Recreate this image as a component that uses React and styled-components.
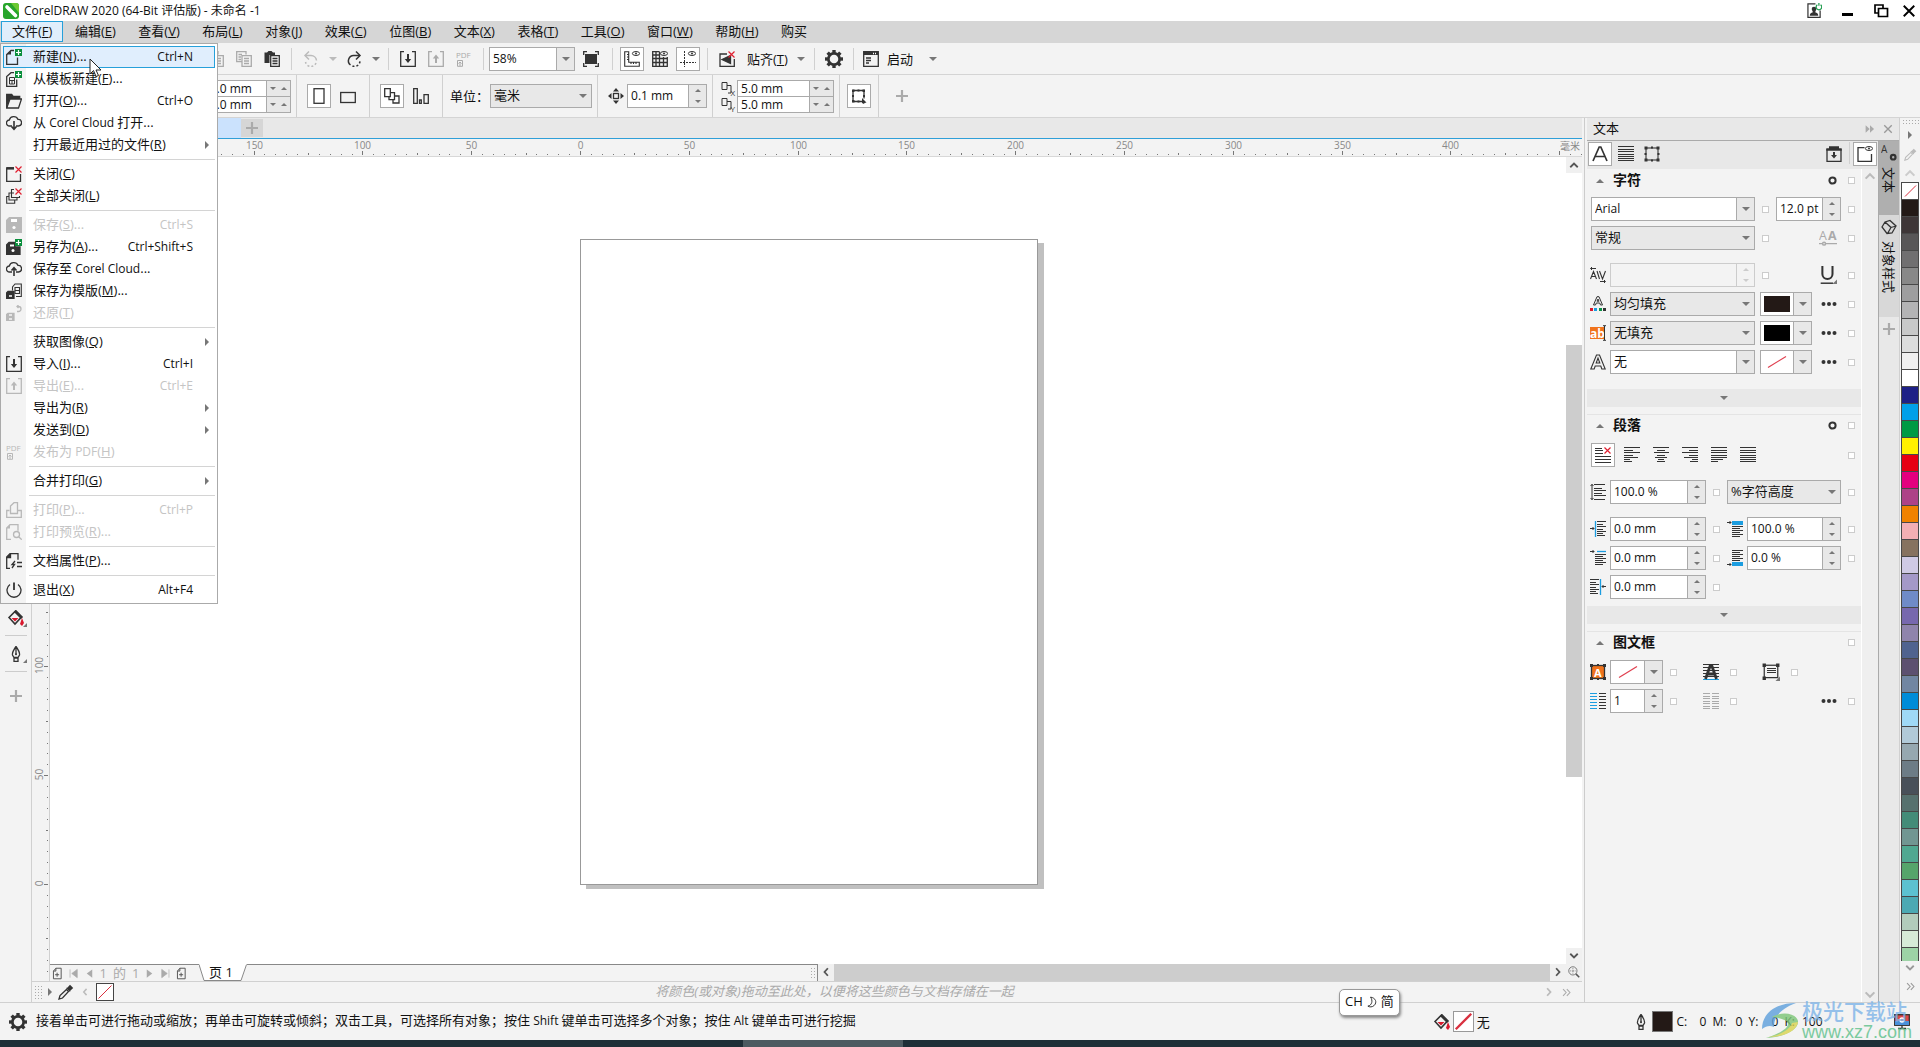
import React from "react";
import styled, { createGlobalStyle } from "styled-components";

const GlobalStyle = createGlobalStyle`
  * {
    box-sizing: border-box;
  }
  body {
    margin: 0;
    overflow: hidden;
    background: #f3f3f3;
    color: #111;
    font-family: "Open Sans", "Noto Sans CJK SC", sans-serif;
    font-size: 13px;
    line-height: 16px;
  }
  button, input, select {
    margin: 0;
    padding: 0;
    border: 0;
    border-radius: 0;
    background: none;
    color: inherit;
    font: inherit;
    outline: none;
  }
  svg {
    display: block;
    flex: none;
    writing-mode: horizontal-tb;
  }
`;

/* ---------- icons ---------- */

const Icon = ({ name, size = 16, color = "#333" }) => (
  <svg
    width={size}
    height={size}
    viewBox="0 0 16 16"
    fill="none"
    stroke={color}
    strokeWidth="1.3"
    color={color}
  >
    {icons[name]}
  </svg>
);

const plusBadge = (
  <>
    <rect x="9" y="0" width="7" height="7" fill="#0a8f3c" stroke="none" />
    <path d="M12.5 1v5M10 3.5h5" stroke="#fff" strokeWidth="1.2" />
  </>
);
const redCross = <path d="M9.5 .5l6 6M15.5 .5l-6 6" stroke="#e02030" strokeWidth="1.2" />;
const eye = (
  <>
    <ellipse cx="12" cy="2.5" rx="3.6" ry="2" strokeWidth="1" />
    <circle cx="12" cy="2.5" r="1" fill="currentColor" stroke="none" />
  </>
);
const corner = <path d="M16 12v4h-4z" fill="#777" stroke="none" />;
const lines = (rows) => (
  <path
    d={rows.map(([x, y, w]) => `M${x} ${y + 0.5}h${w}`).join("")}
    strokeWidth="1"
    shapeRendering="crispEdges"
  />
);
const gearTeeth = [0, 45, 90, 135, 180, 225, 270, 315].map((a) => (
  <rect key={a} x="6.5" y="0" width="3" height="3" fill="currentColor" stroke="none" transform={`rotate(${a} 8 8)`} />
));

const icons = {
  newDoc: <><path d="M11.500 8.500v6.800H.7V5.500L5 1.500h3" /><path d="M.7 5.500L5 1.500v4z" fill="currentColor" stroke="none" />{plusBadge}</>,
  template: <><path d="M8 1.700H5L.7 5.500v9.800h10V8.500" /><path d="M3.500 6.500h5v6.500h-5zM3.500 9.500h5M6 9.500V13" strokeWidth="1" />{plusBadge}</>,
  open: <><path d="M.7 15V1.500h5l1.500 2h6.500V6" /><path d="M.7 1.500h5l1.500 2h6V6H4L.7 14z" fill="currentColor" stroke="none" /><path d="M.7 15L4 6h11.500l-3 9z" /></>,
  cloudDown: <><path d="M6 11H3.6A3 3 0 013.3 5 4.6 4.6 0 0112 4.4 3.3 3.3 0 0112.5 11H10" /><path d="M8 6v8M5.5 11.5L8 14.3l2.5-2.8" strokeWidth="1.6" /></>,
  cloudUp: <><path d="M6 11H3.6A3 3 0 013.3 5 4.6 4.6 0 0112 4.4 3.3 3.3 0 0112.5 11H10" /><path d="M8 15V7M5.5 9.5L8 6.7l2.5 2.8" strokeWidth="1.6" /></>,
  close: <><path d="M14.5 8v7.3H.7V2H8" /><path d="M.7 2.4H8" strokeWidth="2.4" />{redCross}</>,
  closeAll: <><path d="M8 1.500H5.500V5M13.500 8v1.500H5.500V5H8M5.500 5H3v7h8V9.500M3 8.500H.7v6.800h8V12" strokeWidth="1.1" />{redCross}</>,
  save: <><path d="M.5 3.500L3.500 .5h12v15H.5z" fill="currentColor" /><path d="M5 3.500h6" stroke="#fff" strokeWidth="3" /><circle cx="8" cy="10.500" r="1.600" fill="#fff" stroke="none" /></>,
  saveAs: <><path d="M.5 6L3 3.500h6V8h5v7.500H.5z" fill="currentColor" /><path d="M4 6.500h4" stroke="#fff" strokeWidth="2" /><circle cx="7" cy="11.500" r="1.500" fill="#fff" stroke="none" />{plusBadge}</>,
  saveTemplate: <><path d="M6.500 7.500V4L9 1h6.300v12.500H10M9 4.500h4.500v6H9zM9 7.500h4.500" strokeWidth="1.1" /><path d="M.5 10L2 8.500h6v7H.5z" fill="currentColor" /><path d="M3 13h3" stroke="#fff" strokeWidth="1.500" /></>,
  revert: <><path d="M.5 9.500L2 8.500h6v7H.5z" fill="currentColor" /><path d="M3 10h3M3 14h3" stroke="#f3f3f3" strokeWidth="1.300" /><path d="M11 1.500h1.500a2.500 2.500 0 010 5H11M12.500 0L11 1.500 12.500 3" /></>,
  import: <><path d="M4 .7H.7v14.600h14.600V.7H12" /><path d="M8 3v8" strokeWidth="2" /><path d="M4.800 8L8 12l3.200-4z" fill="currentColor" stroke="none" /></>,
  export: <><path d="M4 .7H.7v14.600h14.600V.7H12" /><path d="M8 12V5" strokeWidth="2" /><path d="M4.800 7.500L8 3.500l3.200 4z" fill="currentColor" stroke="none" /></>,
  pdf: <><text x="0" y="7" fontSize="8" fill="currentColor" stroke="none">PDF</text><path d="M1.500 15.300V9.500h5v5.800zM4 15v-4M2.500 12.500L4 11l1.500 1.500" strokeWidth="1" /></>,
  print: <><path d="M3.500 8.500H.7v6.800h14.600V8.500H12" /><path d="M4.500 11.500V4L8 .7h3.500v10.800z" /></>,
  preview: <><path d="M5 15.300H.7V4L4 .7h8v6" /><path d="M.7 4.500V4L4 .7v3.800z" fill="currentColor" stroke="none" /><circle cx="10.500" cy="10.500" r="3" /><path d="M12.700 12.700l3 3" /></>,
  props: <><path d="M4 15.300H.7V4L4 .7h8v6" /><path d="M1 4.500L4.500 1v3.500z" fill="currentColor" /><path d="M11 9.500h5M11 13.500h5M9 8l-3 3.500h2.500L6 15" /></>,
  power: <><path d="M4 2.500a7 7 0 108 0" /><path d="M8 .5v7.500" strokeWidth="1.800" /></>,
  copy: <path d="M10 3.500V.7H.7v10H6M2.500 3.500H6M2.500 6H5M2.500 8.500H5M6 4.700h9.300v10.600H6zM8 7.500h5M8 10h5M8 12.500h5" />,
  paste: <><path d="M1 1.500h2L4.500 0h3L9 1.500h2V4H5.500v8H.5V1.500z" fill="currentColor" stroke="none" /><path d="M6.700 4.700h8.600v10.600H6.700zM8.500 7.500h5M8.500 10h5M8.500 12.500h5" /></>,
  undo: <><path d="M2 4.500h6a5.500 5.500 0 015.500 5" strokeWidth="1.500" /><path d="M6 .5L2 4.500l4 4" strokeWidth="1.500" /><path d="M13 12a5.500 5.500 0 01-10.500-1" strokeDasharray="2 2" strokeWidth="1.500" /></>,
  redo: <><path d="M14 4.500H8A5.300 5.300 0 004.500 14" strokeWidth="1.500" /><path d="M10 .5l4 4-4 4" strokeWidth="1.500" /><path d="M6.500 15a5.500 5.500 0 007.500-5" strokeDasharray="2 2" strokeWidth="1.500" /></>,
  fullScreen: <><rect x="2" y="3" width="12" height="10" fill="currentColor" stroke="none" /><path d="M.7 4V.7H4M12 .7h3.300V4M15.300 12v3.300H12M4 15.300H.7V12" /></>,
  rulers: <><path d="M.7.7h4v10.600h10.600v4H.7zM3 3.500h1.700M3 6h1.700M3 8.500h1.700M7 11.500V13M9.500 11.500V13M12 11.500V13" strokeWidth="1.1" />{eye}</>,
  grid: <><path d="M7.500 .7H.7v14.600h14.600V6M4 .7v14.600M7.500 .7v14.600M11.500 6v9.300M.7 4h7M.7 7.500h14.600M.7 11.500h14.600" />{eye}</>,
  guides: <><path d="M4.500 0v16M0 11.500h16" strokeWidth="1" strokeDasharray="2 1" />{eye}</>,
  snapOff: <><path d="M8 3H1v12.300h14.300V8" /><path d="M3 8.500L11.500 4.500v8z" fill="currentColor" />{redCross}</>,
  gear: <><circle cx="8" cy="8" r="5" strokeWidth="2.400" />{gearTeeth}</>,
  launch: <><path d="M.7.7h14.600v14.600H.7zM3 7h5M3 9.500h5M3 12h3" /><path d="M.7 2.500h14.600" strokeWidth="3" /><path d="M10 2.500h4" stroke="#fff" strokeDasharray="1 1" /></>,
  portrait: <rect x="3" y=".7" width="10" height="14.600" />,
  landscape: <rect x=".7" y="4.500" width="14.600" height="10" />,
  allPages: <path d="M.7.7h5.600v8H.7zM6 4.700h4.500v7H5V9M10 8h5v7H9v-3" />,
  curPage: <path d="M.7.7h3.600v14.600H.7zM6.500 12h1.800v3.300H6.500zM11 6.700h4.300v8.600H11z" />,
  nudge: <><rect x="5.500" y="5.500" width="5" height="5" /><path d="M8 0l3 3.500H5zM8 16l3-3.500H5zM0 8l3.500-3v6zM16 8l-3.500-3v6z" fill="currentColor" stroke="none" /></>,
  dupX: <><path d="M1 1.500h5v7H1zM6 4.500h4V12H7" strokeWidth="1" /><text x="9.500" y="15" fontSize="8" fill="currentColor" stroke="none">X</text></>,
  dupY: <><path d="M1 1.500h5v7H1zM6 4.500h4V12H7" strokeWidth="1" /><text x="9.500" y="15" fontSize="8" fill="currentColor" stroke="none">Y</text></>,
  treat: <><path d="M2 2.500h11v8M11 13.500H2V2.500" /><path d="M1 1.500h2.500v2.500H1zM11.500 1.500H14v2.500h-2.500zM1 12h2.500v2.500H1zM6.500 1.500h2v2h-2zM1 7h2v2H1zM12 7h2v2h-2zM6.500 12.500h2v2h-2z" fill="currentColor" stroke="none" /><path d="M11 10l4.500 4.500-2 .5-.5 1-2-1z" fill="currentColor" stroke="none" /></>,
  bigA: <path d="M1 15L7.200 1h1.600L15 15M3.500 10.500h9" strokeWidth="1.700" />,
  frame: <><rect x="2" y="2" width="12" height="12" strokeWidth="1.1" /><path d="M.5 .5h3v3h-3zM12.500 .5h3v3h-3zM.5 12.500h3v3h-3zM12.500 12.500h3v3h-3zM7 .5h2v2H7zM7 13.500h2v2H7zM.5 7h2v2h-2zM13.500 7h2v2h-2z" fill="currentColor" stroke="none" /></>,
  dock: <><path d="M1 3v12.300h14V3" /><path d="M.3 3.500h15.400M3 1.500h10" strokeWidth="2.400" /><path d="M8 6v4" strokeWidth="2" /><path d="M5 9l3 3.500L11 9z" fill="currentColor" stroke="none" /></>,
  panelEye: <><path d="M7.500 1.700H1v13.600h13.500V8" />{eye}</>,
  caps: <><text x="0" y="10" fontSize="11" fill="currentColor" stroke="none">A</text><text x="8" y="10" fontSize="11" fontWeight="bold" fill="currentColor" stroke="none">A</text><path d="M0 13h3M6 13h10" /><circle cx="4.500" cy="13" r="1.300" /></>,
  kern: <><path d="M.8 1.500H6M2 0L.5 1.500 2 3M10 14.500h5M14 13l1.500 1.500L14 16" strokeWidth="1" /><path d="M.5 12L3.500 4.500 6.500 12M1.500 9.500h4M7 4l2.500 8M9.500 4l3 8 3-8" strokeWidth="1.100" /></>,
  underline: <><path d="M3 0v7a4.500 4.500 0 009 0V0" strokeWidth="1.800" /><path d="M1.500 15.300h11" />{corner}</>,
  fillA: <><path d="M3.500 9L7 .7h2L12.500 9h-2l-.8-2H6.300l-.8 2zM7 5.200h2L8 3z" strokeWidth="1" /><path d="M0 12h3v3H0z" fill="#d9182d" stroke="none" /><path d="M4 12h3v3H4z" fill="#1b9de0" stroke="none" /><path d="M9 12h3v3H9z" fill="#0c9247" stroke="none" /><path d="M13 12h3v3h-3z" fill="#333" stroke="none" /></>,
  bgAb: <><rect x="0" y="2" width="14" height="12" fill="#f0731c" stroke="none" /><text x="0" y="13" fontSize="12" fontWeight="bold" fill="#fff" stroke="none">ab</text><path d="M14.500 1v14M13 .7h3M13 15.300h3" strokeWidth="1" /></>,
  outlineA: <path d="M.8 15L6.500 1h3L15.200 15h-3.400l-1-3H5.200l-1 3zM6.200 9h3.600L8 4z" strokeWidth="1.1" />,
  noAlign: <>{lines([[0, 1, 7], [0, 3, 8], [0, 6, 8], [0, 9, 16], [0, 12, 16], [0, 15, 16]])}{redCross}</>,
  alignLeft: lines([[0, 0, 16], [0, 3, 9], [0, 5, 16], [0, 8, 9], [0, 10, 14], [0, 12, 6], [0, 14, 8]]),
  alignCenter: lines([[0, 0, 16], [4, 3, 8], [1, 5, 15], [4, 8, 8], [2, 10, 12], [5, 12, 6], [4, 14, 8]]),
  alignRight: lines([[0, 0, 16], [7, 3, 9], [0, 5, 16], [7, 8, 9], [2, 10, 14], [10, 12, 6], [8, 14, 8]]),
  justify: lines([[0, 0, 16], [0, 3, 16], [0, 5, 16], [0, 8, 16], [0, 10, 16], [0, 12, 12], [0, 14, 7]]),
  forceJustify: lines([[0, 0, 16], [0, 3, 16], [0, 5, 16], [0, 8, 16], [0, 10, 16], [0, 12, 16], [0, 14, 16]]),
  lineHeight: <><path d="M2 0v16M.5 2L2 .5 3.500 2M.5 14L2 15.500 3.500 14" strokeWidth="1" />{lines([[4, 0, 11], [4, 4, 8], [4, 6, 12], [4, 9, 8], [4, 11, 12], [4, 15, 11]])}</>,
  indentLeft: <><path d="M5.500 0v16" stroke="#1b9de0" /><path d="M0 7.500h4M2.500 6L4 7.500 2.500 9" strokeWidth="1" />{lines([[7, 0, 9], [7, 3, 6], [7, 5, 9], [7, 8, 6], [7, 10, 9], [7, 12, 6], [7, 14, 8]])}</>,
  indentFirst: <><path d="M7 1.500h9" stroke="#1b9de0" /><path d="M0 1.500h4M2.500 0L4 1.500 2.500 3" strokeWidth="1" />{lines([[5, 4, 11], [5, 6, 8], [5, 8, 11], [5, 10, 8], [5, 12, 11], [5, 14, 8]])}</>,
  indentRight: <><path d="M10.500 0v16" stroke="#1b9de0" /><path d="M16 7.500h-4M13.500 6L12 7.500 13.500 9" strokeWidth="1" />{lines([[0, 0, 9], [0, 3, 6], [0, 5, 9], [0, 8, 6], [0, 10, 9], [0, 12, 6], [0, 14, 8]])}</>,
  spaceBefore: <><rect x="5" y="0" width="11" height="4" fill="#1b9de0" stroke="none" /><path d="M0 1.500h4M2.500 0L4 1.500 2.500 3" strokeWidth="1" />{lines([[5, 5, 11], [5, 7, 8], [5, 9, 11], [5, 11, 8], [5, 13, 11], [5, 15, 8]])}</>,
  spaceAfter: <><rect x="5" y="12" width="11" height="4" fill="#1b9de0" stroke="none" /><path d="M0 14.500h4M2.500 13L4 14.500 2.500 16" strokeWidth="1" />{lines([[5, 0, 11], [5, 2, 8], [5, 4, 11], [5, 6, 8], [5, 8, 11], [5, 10, 8]])}</>,
  frameFill: <><rect x="1.500" y="1.500" width="13" height="13" fill="#f0731c" /><path d="M0 0h3v3H0zM13 0h3v3h-3zM0 13h3v3H0zM13 13h3v3h-3zM7 0h2v2H7zM7 14h2v2H7z" fill="currentColor" stroke="none" /><text x="4" y="12.500" fontSize="11" fontWeight="bold" fill="#fff" stroke="none">A</text></>,
  baseA: <>{lines([[0, 0, 16], [0, 3, 16], [0, 6, 16], [0, 9, 16], [0, 12, 16]])}<path d="M0 15.500h16" stroke="#1b9de0" strokeWidth="1" /><path d="M2.500 15L7.300 1.500h1.400L13.500 15M5 10h6" strokeWidth="2.800" /></>,
  frameText: <><rect x="2" y="2" width="12" height="11" strokeWidth="1.1" /><path d="M.5 .5h3v3h-3zM12.500 .5h3v3h-3zM.5 12h3v3h-3z" fill="currentColor" stroke="none" />{lines([[4, 4, 8], [4, 6, 8], [4, 8, 8]])}{corner}</>,
  colsBlue: <><g stroke="#1b9de0">{lines([0, 3, 6, 9, 12, 15].map((y) => [0, y, 7]))}</g>{lines([0, 3, 6, 9, 12, 15].map((y) => [9, y, 7]))}</>,
  cols: <>{lines([0, 3, 5, 8, 10, 13, 15].map((y) => [0, y, 7]))}{lines([0, 3, 5, 8, 10, 13, 15].map((y) => [9, y, 7]))}</>,
  bucket: <><path d="M1 7.500L7.500 1l6 6-6.500 7z" strokeWidth="1.600" /><path d="M7 1l7 7" strokeWidth="3" /><path d="M3.500 8h7L7 11.500z" fill="#d9182d" stroke="none" /><path d="M14 8l2 5-2 3-2-2z" fill="#d9182d" stroke="none" /></>,
  pen: <><path d="M8 .5C5.500 4 4 6.500 4.500 9l1.500 2.500h4L11.500 9C12 6.500 10.500 4 8 .5zM8 1v7M6 12h4v3.300H6z" /><circle cx="8" cy="8.300" r="1" fill="currentColor" stroke="none" /></>,
  dropper: <><path d="M1 15l1-3.500 6.500-6 2 2L4.500 14z" /><path d="M8 4l1.500-.5L12 .8 15.200 4l-2.700 2.500L12 8z" fill="currentColor" stroke="none" /></>,
  zoomFit: <><circle cx="6.500" cy="6.500" r="5.500" strokeWidth="1" /><path d="M10.500 10.500L15 15" strokeWidth="2" /><path d="M6.500 3v7M3 6.500h7" strokeWidth="1" strokeDasharray="1 1" /></>,
  addPage: <path d="M3 5v9.500h9.500v-13H6zM3 5h3V1.500M5 9.500h5M7.500 7v5" strokeWidth="1.200" />,
  user: <><path d="M9 1H1v14.300h13V8" /><circle cx="7.500" cy="6.500" r="2.500" fill="currentColor" stroke="none" /><path d="M3 13.500c0-3 2-3.500 4.500-3.500s4.500.5 4.500 3.500zM6 8h3v3H6z" fill="currentColor" stroke="none" /><path d="M11 1.800a3 3 0 103.500 0M12.700 0v3" stroke="#1d9a4c" /></>,
  restore: <path d="M10 5V2H2v8h3M5.500 5.500h9v8h-9z" stroke="#000" strokeWidth="1.700" />,
  x: <path d="M2 2l12 12M14 2L2 14" strokeWidth="2.200" />,
  chevUp: <path d="M3 11l5-5 5 5" strokeWidth="2.400" />,
  chevDown: <path d="M3 5l5 5 5-5" strokeWidth="2.400" />,
  chevLeft: <path d="M10.500 3L6 8l4.500 5" strokeWidth="2.400" />,
  chevRight: <path d="M5.500 3L10 8l-4.500 5" strokeWidth="2.400" />,
  dblChev: <path d="M3 3l4.500 5L3 13M8.500 3L13 8l-4.500 5" strokeWidth="1.600" />,
  dblArrow: <path d="M1 2l6.500 6L1 14zM8 2l6.500 6L8 14z" fill="currentColor" stroke="none" />,
  plus: <path d="M8 2v12M2 8h12" strokeWidth="2.200" />,
  dots: <><circle cx="2.500" cy="8" r="2" fill="currentColor" stroke="none" /><circle cx="8" cy="8" r="2" fill="currentColor" stroke="none" /><circle cx="13.500" cy="8" r="2" fill="currentColor" stroke="none" /></>,
  ring: <circle cx="8" cy="8" r="5.500" strokeWidth="3.600" />,
  moon: <path d="M6 1.500c7 1 9 7 5 11-2.500 2.500-6.500 2.500-8.500 1C8 12.500 9.500 6 6 1.500z" />,
  textTab: <><text x="0" y="8" fontSize="10" fill="currentColor" stroke="none">A</text><circle cx="12.200" cy="12.200" r="2.300" strokeWidth="2.200" /></>,
  styleTab: <path d="M1 8l3-5 5-1.500 6 5.500-4 7-5 .5zM4 3l6 5.500-3.500 6M10 8.500l5-1.500" />,
  monitor: <><rect x=".7" y=".7" width="14.600" height="10.600" fill="#e04848" /><path d="M1 7h14v4H1z" fill="#4a90d9" stroke="none" /><circle cx="8" cy="6" r="2" stroke="#fff" /><path d="M8 11v3M4 14.500h8" /></>,
  first: <path d="M1.500 2v12M12 2v12L4 8z" fill="currentColor" strokeWidth="1" />,
  last: <path d="M14.500 2v12M4 2v12l8-6z" fill="currentColor" strokeWidth="1" />,
  prev: <path d="M12 2v12L4 8z" fill="currentColor" stroke="none" />,
  next: <path d="M4 2v12l8-6z" fill="currentColor" stroke="none" />,
};

const Triangle = styled.span`
  display: inline-block;
  flex: none;
  width: 0;
  height: 0;
  border: ${(p) => p.$size || 4}px solid transparent;
  ${(p) => (p.$dir === "up" ? "border-top-width: 0; border-bottom-color" : p.$dir === "right" ? "border-right-width: 0; border-left-color" : "border-bottom-width: 0; border-top-color")}: ${(p) => p.$color || "#777"};
`;

/* ---------- shell ---------- */

const Window = styled.div`
  position: relative;
  display: flex;
  flex-direction: column;
  height: 100vh;
`;

const TitleBar = styled.header`
  display: flex;
  flex: none;
  align-items: center;
  height: 21px;
  padding-left: 3px;
  background: #fff;
`;

const Title = styled.h1`
  flex: 1;
  margin: 0 0 0 5px;
  font-size: 12px;
  font-weight: normal;
`;

const WindowButton = styled.button`
  display: flex;
  align-items: center;
  justify-content: center;
  width: ${(p) => p.$width || 33}px;
  height: 20px;
`;

const MenuBar = styled.nav`
  flex: none;
  height: 22px;
  padding: 0 1px 1px;
  background: #d6d6d6;
`;

const MenuList = styled.div`
  display: flex;
  justify-content: space-between;
  max-width: 817px;
  height: 21px;
`;

const MenuButton = styled.button`
  padding: 0 10px 2px;
  border: 1px solid ${(p) => (p.$open ? "#26a0da" : "transparent")};
  background: ${(p) => (p.$open ? "#e0eefb" : "transparent")};
  white-space: nowrap;
`;

const Toolbar = styled.div`
  display: flex;
  flex: none;
  align-items: center;
  height: 32px;
  padding-left: 202px;
  border-bottom: 1px solid #d4d4d4;
`;

const PropertyBar = styled(Toolbar)`
  height: 43px;
  padding-left: 192px;
`;

const Separator = styled.span`
  flex: none;
  width: 1px;
  height: ${(p) => p.$height || 22}px;
  margin: 0 ${(p) => p.$gap || 5}px;
  background: #d0d0d0;
`;

const ToolButton = styled.button`
  display: flex;
  flex: none;
  align-items: center;
  justify-content: center;
  width: 24px;
  height: 24px;
  margin: 0 2px;
  border: 1px solid ${(p) => (p.$active ? "#aaa" : "transparent")};
  background: ${(p) => (p.$active ? "#fff" : "transparent")};
`;

const DropButton = styled.button`
  display: flex;
  align-items: center;
  justify-content: center;
  width: 15px;
  height: 24px;
`;

const TextButton = styled.button`
  display: flex;
  align-items: center;
  gap: 8px;
  padding: 0 ${(p) => p.$pad || 3}px;
  white-space: nowrap;
`;

const UnitLabel = styled.label`
  display: flex;
  align-items: center;
  gap: 1px;
  margin-left: 2px;
`;

const PageButtons = styled.div`
  display: flex;
  gap: 1px;
  padding: 0 2px 0 3px;
`;

const FieldIcon = styled.span`
  padding: 0 3px 0 5px;
`;

/* ---------- fields ---------- */

const Box = styled.span`
  display: flex;
  flex: none;
  width: ${(p) => p.$width}px;
  height: ${(p) => p.$height || 24}px;
  border: 1px solid ${(p) => (p.$disabled ? "#ccc" : "#aaa")};
  background: ${(p) => (p.$disabled ? "#f3f3f3" : p.$gray ? "#e8e8e8" : "#fff")};

  & + & {
    margin-top: -1px;
  }
  input,
  select {
    flex: 1;
    width: 100%;
    min-width: 0;
    padding-left: 3px;
    appearance: none;
    font-size: ${(p) => (p.$cjk ? 13 : 12)}px;
  }
  select {
    padding-bottom: ${(p) => (p.$cjk ? 2 : 0)}px;
  }
`;

const Side = styled.span`
  display: flex;
  flex: none;
  flex-direction: ${(p) => (p.$row ? "row" : "column")};
  align-items: center;
  align-self: stretch;
  justify-content: space-around;
  width: ${(p) => (p.$row ? 24 : 18)}px;
  border-left: 1px solid ${(p) => (p.$plain ? "transparent" : p.$disabled ? "#ccc" : "#aaa")};
  background: ${(p) => (p.$disabled ? "#f3f3f3" : "#e8e8e8")};
  pointer-events: none;
`;

const Combo = ({ label, width, value, gray, cjk }) => (
  <Box $width={width} $gray={gray} $cjk={cjk}>
    <select aria-label={label}>
      <option>{value}</option>
    </select>
    <Side $plain={gray}>
      <Triangle />
    </Side>
  </Box>
);

const Spin = ({ label, width, value = "", disabled }) => (
  <Box $width={width} $disabled={disabled}>
    <input aria-label={label} defaultValue={value} disabled={disabled} />
    <Side $disabled={disabled}>
      <Triangle $dir="up" $size={3} $color={disabled ? "#ccc" : undefined} />
      <Triangle $size={3} $color={disabled ? "#ccc" : undefined} />
    </Side>
  </Box>
);

const PairSpin = ({ label, width, value }) => (
  <Box $width={width} $height={17}>
    <input aria-label={label} defaultValue={value} />
    <Side $row>
      <Triangle $size={3} />
      <Triangle $dir="up" $size={3} />
    </Side>
  </Box>
);

const Stack = styled.div`
  display: flex;
  flex-direction: column;
  padding-top: 1px;
`;

const DupIcons = styled(Stack)`
  margin-left: 3px;
`;

const Lock = styled.input.attrs({ type: "checkbox" })`
  flex: none;
  appearance: none;
  width: 7px;
  height: 7px;
  margin: 0 7px;
  border: 1px solid #ccc;
  background: #fff;

  &:last-child {
    margin: 0 0 0 auto;
  }
`;

const ColorPicker = styled.button`
  display: flex;
  width: ${(p) => p.$width || 52}px;
  height: 24px;
  margin-left: ${(p) => p.$gap || 0}px;
  border: 1px solid #aaa;
  background: #fff;
`;

const ColorFace = styled.span`
  display: flex;
  flex: 1;
  align-items: center;
  justify-content: center;
  align-self: stretch;
  margin: 3px;
  background: ${(p) => p.$color || "transparent"};
`;

const Picker = ({ label, color, width, gap }) => (
  <ColorPicker aria-label={label} $width={width} $gap={gap}>
    <ColorFace $color={color}>
      {!color && (
        <svg width="20" height="12" viewBox="0 0 20 12" stroke="#e04050" strokeWidth="1.2">
          <path d="M1 11.500L19 .5" />
        </svg>
      )}
    </ColorFace>
    <Side>
      <Triangle />
    </Side>
  </ColorPicker>
);

/* ---------- document area ---------- */

const Workspace = styled.main`
  display: flex;
  flex: 1;
  min-height: 0;
`;

const Toolbox = styled.aside`
  display: flex;
  flex: none;
  flex-direction: column;
  align-items: center;
  width: 32px;
  padding-top: 482px;
  border-right: 1px solid #d0d0d0;
`;

const ToolboxButton = styled.button`
  position: relative;
  display: flex;
  flex: none;
  align-items: center;
  justify-content: center;
  width: 22px;
  height: ${(p) => (p.$last ? 48 : 36)}px;
  border-bottom: 1px solid ${(p) => (p.$last ? "transparent" : "#ccc")};

  &::after {
    content: "";
    display: ${(p) => (p.$last ? "none" : "block")};
    position: absolute;
    right: 0;
    bottom: 8px;
    border-left: 4px solid transparent;
    border-bottom: 4px solid #777;
  }
`;

const DocumentArea = styled.section`
  display: flex;
  flex: 1;
  flex-direction: column;
  min-width: 0;
  padding-right: 2px;
`;

const TabStrip = styled.div`
  display: flex;
  flex: none;
  height: 21px;
  border-bottom: 1px solid #2f9fd8;
  background: #e8e8e8;
`;

const DocTab = styled.span`
  width: 209px;
  background: #cbe2fd;
`;

const AddTab = styled.button`
  display: flex;
  align-items: center;
  justify-content: center;
  width: 22px;
  height: 18px;
  margin-top: 1px;
  background: #d6d6d6;
`;

const RulerTop = styled.div`
  display: flex;
  position: relative;
  flex: none;
  height: 18px;
  border-bottom: 1px solid #d8d8d8;
`;

const RulerLeft = styled.div`
  flex: none;
  width: 18px;
  border-right: 1px solid #d0d0d0;
  overflow: hidden;
`;

const Ticks = styled.svg`
  width: 100%;
  height: 100%;
  overflow: hidden;
  stroke: #777;
  shape-rendering: crispEdges;

  text {
    fill: #888;
    stroke: none;
    font-size: 10px;
    text-anchor: middle;
  }
`;

const RulerUnit = styled.span`
  position: absolute;
  top: 0;
  right: 2px;
  color: #888;
  font-size: 10px;
  line-height: 14px;
`;

const Row = styled.div`
  display: flex;
  flex: 1;
  min-height: 0;
`;

const Column = styled.div`
  display: flex;
  flex: 1;
  flex-direction: column;
  min-width: 0;
`;

const Canvas = styled.div`
  position: relative;
  flex: 1;
  background: #fff;
  overflow: hidden;
`;

const Sheet = styled.div`
  position: absolute;
  left: 530px;
  top: 82px;
  width: 458px;
  height: 646px;
  border: 1px solid #999;
  background: #fff;
  box-shadow: 6px 4px 0 #c0c0c0;
`;

const VScroll = styled.div`
  display: flex;
  flex: none;
  flex-direction: column;
  width: 16px;
  background: #fff;
`;

const ScrollButton = styled.button`
  display: flex;
  flex: none;
  align-items: center;
  justify-content: center;
  width: 16px;
  height: 16px;
  background: #f0f0f0;
`;

const Track = styled.span`
  flex: ${(p) => p.$grow};
  background: ${(p) => (p.$thumb ? "#cdcdcd" : "#fff")};
`;

const NavRow = styled.div`
  display: flex;
  flex: none;
  height: 17px;
`;

const PageNav = styled.div`
  display: flex;
  flex: none;
  align-items: center;
  justify-content: space-between;
  width: 149px;
  padding: 0 11px 0 1px;
  border-top: 1px solid #888;
  color: #aaa;

  button {
    display: flex;
  }
`;

const PageCount = styled.span`
  display: flex;
  gap: 6px;
`;

const PageTab = styled.button`
  position: relative;
  display: flex;
  flex: none;
  align-items: center;
  justify-content: center;
  width: 48px;
  height: 17px;

  svg {
    position: absolute;
    left: 0;
    top: 0;
  }
  span {
    position: relative;
    padding-right: 4px;
    padding-bottom: 2px;
  }
`;

const NavFill = styled.div`
  display: flex;
  flex: 566;
  justify-content: flex-end;
  padding: 2px;
  border-top: 1px solid #888;
  border-right: 1px solid #888;
`;

const HScroll = styled.div`
  display: flex;
  flex: 765;
  background: #f0f0f0;
`;

const Grip = styled.span`
  flex: none;
  width: ${(p) => p.$width || 5}px;
  height: ${(p) => p.$height || 14}px;
  background-image: radial-gradient(#aaa 1px, transparent 1px);
  background-size: 3px 3px;
`;

const DocPalette = styled.div`
  display: flex;
  flex: none;
  align-items: center;
  gap: 6px;
  height: 21px;
  padding: 0 10px 0 2px;
  border-top: 1px solid #d0d0d0;
`;

const DocHint = styled.em`
  flex: 1;
  padding: 0 0 2px 12px;
  color: #aaa;
  text-align: center;
`;

const Swatch = styled.span`
  display: flex;
  flex: none;
  width: ${(p) => p.$size}px;
  height: ${(p) => p.$size}px;
  border: 1px solid ${(p) => p.$line || "#444"};
  background: ${(p) => p.$color || "#fff"};
`;

const NoColor = ({ size, line, width = 1 }) => (
  <Swatch $size={size} $line={line}>
    <svg width={size - 2} height={size - 2} viewBox="0 0 16 16" stroke="#d9303f" strokeWidth={width}>
      <path d="M1.500 14.500L14.500 1.500" />
    </svg>
  </Swatch>
);

/* ---------- docker ---------- */

const Docker = styled.section`
  display: flex;
  flex: none;
  flex-direction: column;
  width: 315px;
  padding-left: 2px;
  border-left: 1px solid #ccc;
`;

const DockerHead = styled.header`
  display: flex;
  flex: none;
  align-items: center;
  gap: 8px;
  height: 23px;
  padding: 0 6px;
  border-bottom: 1px solid #aaa;
  background: #e8e8e8;

  h2 {
    flex: 1;
    margin: 0;
    padding-bottom: 2px;
    font-size: 13px;
    font-weight: normal;
  }
`;

const DockerMain = styled.div`
  display: flex;
  flex: 1;
  flex-direction: column;
  min-width: 0;
`;

const DockerTools = styled.div`
  display: flex;
  flex: none;
  gap: 2px;
  height: 28px;
  padding: 1px;
  background: #e8e8e8;

  ${ToolButton} {
    margin: 0;
  }
`;

const Spacer = styled.span`
  flex: 1;
`;

const DockerBody = styled.div`
  display: flex;
  flex: 1;
  min-height: 0;
`;

const Sections = styled.div`
  flex: 1;
  border-right: 1px solid #fff;
`;

const DockerScroll = styled.div`
  display: flex;
  flex-direction: column;
  justify-content: space-between;
  align-items: center;
  width: 16px;
  background: #efefef;
`;

const SectionHead = styled.h3`
  display: flex;
  align-items: center;
  height: 22px;
  margin: 0 0 ${(p) => (p.$first ? 6 : 7)}px;
  padding: 0 6px 0 9px;
  border-top: 1px solid ${(p) => (p.$first ? "transparent" : "#e4e4e4")};
  font-size: 14px;

  span + span {
    flex: 1;
    margin-left: 9px;
    padding-bottom: 2px;
  }
  ${Lock} {
    margin: 0 0 0 11px;
  }
`;

const Lead = styled.span`
  flex: none;
  width: 20px;
`;

const Trail = styled.span`
  display: flex;
  justify-content: flex-end;
  margin: 0 11px 0 auto;
`;

const FieldRow = styled.div`
  display: flex;
  align-items: center;
  height: 24px;
  margin-bottom: ${(p) => p.$gap || 5}px;
  padding: 0 6px 0 ${(p) => p.$inset || 3}px;

  ${Trail} + ${Lock} {
    margin: 0;
  }
`;

const Expander = styled.button`
  display: flex;
  align-items: center;
  justify-content: center;
  width: 100%;
  height: 18px;
  margin: ${(p) => p.$top || 7}px 0 7px;
  background: #e8e8e8;
`;

const AlignRow = styled(FieldRow)`
  gap: 13px;

  ${ToolButton} {
    margin: 0 -4px 0 0;
  }
`;

const FrameCell = styled.span`
  display: flex;
  flex: none;
  align-items: center;
  width: ${(p) => p.$width}px;

  ${Lock}, ${Lock}:last-child {
    margin: 0 0 0 ${(p) => p.$gap || 11}px;
  }
`;

const TabColumn = styled.div`
  display: flex;
  flex-direction: column;
  align-items: center;
  width: 21px;
  border-left: 1px solid #aaa;
  background: #e8e8e8;
`;

const SideTab = styled.button`
  display: flex;
  flex: none;
  align-items: center;
  gap: 6px;
  width: 20px;
  height: ${(p) => p.$height}px;
  padding: 4px 0;
  background: ${(p) => (p.$active ? "#afafaf" : "#d8d8d8")};
  line-height: 18px;
  writing-mode: vertical-rl;
  text-orientation: sideways;
`;

/* ---------- colour strip ---------- */

const ColorStrip = styled.aside`
  display: flex;
  flex: none;
  flex-direction: column;
  align-items: center;
  width: 21px;
  padding-bottom: 5px;
  border-left: 1px solid #d0d0d0;
`;

const StripCell = styled.button`
  display: flex;
  flex: none;
  align-items: center;
  justify-content: center;
  width: 20px;
  height: ${(p) => p.$height}px;
`;

const StripColors = styled.div`
  flex: 1;
  min-height: 0;
  overflow: hidden;
`;

const StripColor = styled.button`
  display: block;
  width: 18px;
  height: 17px;
  border: 1px solid #484848;
  border-bottom-width: 0;
  background: ${(p) => p.$color};
`;

/* ---------- file menu ---------- */

const FileMenu = styled.ul`
  position: absolute;
  z-index: 2;
  left: 0;
  top: 43px;
  width: 218px;
  margin: 0;
  padding: 2px;
  border: 1px solid #aaa;
  background: linear-gradient(90deg, #f3f3f3 25px, #fff 25px);
  list-style: none;
`;

const Entry = styled.button`
  display: flex;
  align-items: center;
  width: 212px;
  height: 22px;
  padding: 0 5px 0 2px;
  border: 1px solid ${(p) => (p.$hot ? "#26a0da" : "transparent")};
  background: ${(p) => (p.$hot ? "#e0eefd" : "transparent")};
  color: ${(p) => (p.disabled ? "#c4c4c4" : "#111")};
  text-align: left;
  white-space: nowrap;
`;

const EntryIcon = styled.span`
  width: 27px;
`;

const EntryText = styled.span`
  flex: 1;
  padding-bottom: 2px;
`;

const Latin = styled.span`
  font-size: 12px;
`;

const Shortcut = styled(Latin)`
  margin-right: 16px;
`;

const Rule = styled.li`
  height: 1px;
  margin: 3px 0 3px 26px;
  background: #d4d4d4;
`;

const Pointer = styled.svg`
  position: absolute;
  z-index: 3;
  left: 89px;
  top: 58px;
`;

/* ---------- status bar ---------- */

const StatusBar = styled.footer`
  display: flex;
  flex: none;
  align-items: center;
  height: 38px;
  padding: 0 10px 0 9px;
  border-top: 1px solid #d0d0d0;
`;

const StatusText = styled.p`
  flex: 1400;
  margin: 0 0 0 9px;
  padding-bottom: 2px;
  white-space: nowrap;
`;

const StatusGroup = styled.div`
  display: flex;
  flex: ${(p) => p.$grow};
  align-items: center;
  gap: 3px;
`;

const Ink = styled.span`
  display: flex;
  gap: 6px;
  font-size: 12px;
`;

const InkValue = styled.span`
  display: flex;
  justify-content: space-between;
  min-width: 30px;
  gap: 7px;
`;

const TaskBar = styled.div`
  display: flex;
  flex: none;
  justify-content: center;
  height: 7px;
  background: #1e2f37;

  span {
    width: 160px;
    margin-right: 274px;
    background: #4c5b61;
  }
`;

const InputBadge = styled.div`
  position: absolute;
  left: 1339px;
  bottom: 31px;
  display: flex;
  align-items: center;
  gap: 3px;
  padding: 3px 5px 5px;
  border: 1px solid #999;
  border-radius: 5px;
  background: #fff;
  box-shadow: 1px 2px 3px #888;
  line-height: 17px;
  white-space: nowrap;
`;

const SiteMark = styled.div`
  position: absolute;
  right: 8px;
  bottom: 6px;
  display: flex;
  align-items: center;
  opacity: 0.8;

  strong {
    display: block;
    color: #7db4e8;
    font-size: 21px;
    font-weight: 500;
    line-height: 24px;
  }
  span {
    display: block;
    color: #5cc08a;
    font-family: "Liberation Sans", sans-serif;
    font-size: 18px;
    line-height: 18px;
  }
`;

/* ---------- data ---------- */

const menus = [
  ["文件", "F"], ["编辑", "E"], ["查看", "V"], ["布局", "L"], ["对象", "J"], ["效果", "C"], ["位图", "B"],
  ["文本", "X"], ["表格", "T"], ["工具", "O"], ["窗口", "W"], ["帮助", "H"], ["购买"],
];

const fileMenu = [
  { text: "新建", key: "N", more: true, short: "Ctrl+N", icon: "newDoc", hot: true },
  { text: "从模板新建", key: "F", more: true, icon: "template" },
  { text: "打开", key: "O", more: true, short: "Ctrl+O", icon: "open" },
  { text: "从 Corel Cloud 打开", more: true, icon: "cloudDown" },
  { text: "打开最近用过的文件", key: "R", sub: true },
  null,
  { text: "关闭", key: "C", icon: "close" },
  { text: "全部关闭", key: "L", icon: "closeAll" },
  null,
  { text: "保存", key: "S", more: true, short: "Ctrl+S", icon: "save", off: true },
  { text: "另存为", key: "A", more: true, short: "Ctrl+Shift+S", icon: "saveAs" },
  { text: "保存至 Corel Cloud", more: true, icon: "cloudUp" },
  { text: "保存为模版", key: "M", more: true, icon: "saveTemplate" },
  { text: "还原", key: "T", icon: "revert", off: true },
  null,
  { text: "获取图像", key: "Q", sub: true },
  { text: "导入", key: "I", more: true, short: "Ctrl+I", icon: "import" },
  { text: "导出", key: "E", more: true, short: "Ctrl+E", icon: "export", off: true },
  { text: "导出为", key: "R", sub: true },
  { text: "发送到", key: "D", sub: true },
  { text: "发布为 PDF", key: "H", icon: "pdf", off: true },
  null,
  { text: "合并打印", key: "G", sub: true },
  null,
  { text: "打印", key: "P", more: true, short: "Ctrl+P", icon: "print", off: true },
  { text: "打印预览", key: "R", more: true, icon: "preview", off: true },
  null,
  { text: "文档属性", key: "P", more: true, icon: "props" },
  null,
  { text: "退出", key: "X", short: "Alt+F4", icon: "power" },
];

const colors = [
  "#231916", "#3e3637", "#585657", "#706f70", "#888888", "#9e9e9f", "#b4b4b5", "#c8c9c9", "#dcdddd",
  "#efefef", "#ffffff", "#1d2086", "#00a0e9", "#009a44", "#fff000", "#e60012", "#e4007f", "#ad4387",
  "#ef8200", "#f3afb3", "#86725f", "#cfcae4", "#a499c8", "#6f8bc8", "#7768ae", "#8f84ac", "#50638f",
  "#5c5070", "#7186a2", "#008cd8", "#9fd9f6", "#b1cad8", "#96a8b0", "#6d7c86", "#485059", "#56716e",
  "#438c78", "#719692", "#50a891", "#56a56b", "#5cc1d0", "#4ba9b3", "#b2ccbc", "#d6ead7", "#9dd3a6",
];

const inks = [["C:", "0"], ["M:", "0"], ["Y:", "0"], ["K:", "100"]];

const MM = 2.176;
const range = (from, to) => Array.from({ length: (to - from) / 5 + 1 }, (_, i) => from + i * 5);
const tickSize = (mm) => (mm % 50 === 0 ? 5 : mm % 25 === 0 ? 3 : 2);

const TopRuler = () => (
  <Ticks>
    {range(-245, 460).map((mm) => {
      const x = Math.round(548 + mm * MM) + 0.5;
      return (
        <g key={mm}>
          <path d={`M${x} ${17 - tickSize(mm)}V16`} />
          {mm % 50 === 0 && mm < 450 && <text x={x} y="10">{Math.abs(mm)}</text>}
        </g>
      );
    })}
  </Ticks>
);

const SideRuler = () => (
  <Ticks>
    {range(-40, 330).map((mm) => {
      const y = Math.round(727 - mm * MM) + 0.5;
      return (
        <g key={mm}>
          <path d={`M${17 - tickSize(mm)} ${y}H16`} />
          {mm % 50 === 0 && <text transform={`translate(11 ${y - 1}) rotate(-90)`}>{Math.abs(mm)}</text>}
        </g>
      );
    })}
  </Ticks>
);

const Accel = ({ text, letter, more }) => (
  <>
    {text.split(/([A-Za-z ]+)/).map((part, i) => (i % 2 ? <Latin key={i}>{part}</Latin> : part))}
    {letter && <>(<u>{letter}</u>)</>}
    {more && "..."}
  </>
);

const Tool = ({ icon, label, color, active, size }) => (
  <ToolButton aria-label={label} $active={active}>
    <Icon name={icon} color={color} size={size} />
  </ToolButton>
);

/* ---------- panels ---------- */

const CharacterSection = () => (
  <>
    <SectionHead $first>
      <Triangle $dir="up" />
      <span>字符</span>
      <Icon name="ring" size={9} />
      <Lock aria-label="字符" />
    </SectionHead>
    <FieldRow $inset={4}>
      <Combo label="字体" width={164} value="Arial" />
      <Lock aria-label="字体" />
      <Spin label="字号" width={65} value="12.0 pt" />
      <Lock aria-label="字号" />
    </FieldRow>
    <FieldRow $inset={4} $gap={13}>
      <Combo label="样式" width={164} value="常规" gray cjk />
      <Lock aria-label="样式" />
      <Trail><Icon name="caps" color="#aaa" size={18} /></Trail>
      <Lock aria-label="大写" />
    </FieldRow>
    <FieldRow>
      <Lead><Icon name="kern" /></Lead>
      <Spin label="字距" width={145} disabled />
      <Lock aria-label="字距" />
      <Trail><Icon name="underline" size={18} /></Trail>
      <Lock aria-label="下划线" />
    </FieldRow>
    <FieldRow>
      <Lead><Icon name="fillA" /></Lead>
      <Combo label="填充" width={145} value="均匀填充" gray cjk />
      <Picker label="填充色" color="#231916" gap={5} />
      <Trail><Icon name="dots" /></Trail>
      <Lock aria-label="填充" />
    </FieldRow>
    <FieldRow>
      <Lead><Icon name="bgAb" /></Lead>
      <Combo label="背景" width={145} value="无填充" gray cjk />
      <Picker label="背景色" color="#000" gap={5} />
      <Trail><Icon name="dots" /></Trail>
      <Lock aria-label="背景" />
    </FieldRow>
    <FieldRow>
      <Lead><Icon name="outlineA" /></Lead>
      <Combo label="轮廓" width={145} value="无" cjk />
      <Picker label="轮廓色" gap={5} />
      <Trail><Icon name="dots" /></Trail>
      <Lock aria-label="轮廓" />
    </FieldRow>
    <Expander aria-label="字符" $top={15}><Triangle /></Expander>
  </>
);

const ParagraphSection = () => (
  <>
    <SectionHead>
      <Triangle $dir="up" />
      <span>段落</span>
      <Icon name="ring" size={9} />
      <Lock aria-label="段落" />
    </SectionHead>
    <AlignRow $inset={4} $gap={13}>
      <Tool icon="noAlign" label="无" active />
      {["alignLeft", "alignCenter", "alignRight", "justify", "forceJustify"].map((n) => (
        <Icon key={n} name={n} />
      ))}
      <Lock aria-label="对齐" />
    </AlignRow>
    <FieldRow $gap={13}>
      <Lead><Icon name="lineHeight" /></Lead>
      <Spin label="行间距" width={96} value="100.0 %" />
      <Lock aria-label="行间距" />
      <Combo label="行间距单位" width={114} value="%字符高度" gray cjk />
      <Lock aria-label="行间距单位" />
    </FieldRow>
    <FieldRow>
      <Lead><Icon name="indentLeft" /></Lead>
      <Spin label="左行缩进" width={96} value="0.0 mm" />
      <Lock aria-label="左行缩进" />
      <Lead><Icon name="spaceBefore" /></Lead>
      <Spin label="段前间距" width={94} value="100.0 %" />
      <Lock aria-label="段前间距" />
    </FieldRow>
    <FieldRow>
      <Lead><Icon name="indentFirst" /></Lead>
      <Spin label="首行缩进" width={96} value="0.0 mm" />
      <Lock aria-label="首行缩进" />
      <Lead><Icon name="spaceAfter" /></Lead>
      <Spin label="段后间距" width={94} value="0.0 %" />
      <Lock aria-label="段后间距" />
    </FieldRow>
    <FieldRow>
      <Lead><Icon name="indentRight" /></Lead>
      <FrameCell $width={110} $gap={7}>
        <Spin label="右行缩进" width={96} value="0.0 mm" />
        <Lock aria-label="右行缩进" />
      </FrameCell>
    </FieldRow>
    <Expander aria-label="段落"><Triangle /></Expander>
  </>
);

const FrameSection = () => (
  <>
    <SectionHead>
      <Triangle $dir="up" />
      <span>图文框</span>
      <Lock aria-label="图文框" />
    </SectionHead>
    <FieldRow>
      <Lead><Icon name="frameFill" /></Lead>
      <FrameCell $width={93} $gap={7}>
        <Picker label="图文框颜色" width={53} />
        <Lock aria-label="图文框颜色" />
      </FrameCell>
      <FrameCell $width={59}>
        <Icon name="baseA" />
        <Lock aria-label="基线" />
      </FrameCell>
      <FrameCell $width={59}>
        <Icon name="frameText" size={18} />
        <Lock aria-label="垂直对齐" />
      </FrameCell>
    </FieldRow>
    <FieldRow>
      <Lead><Icon name="colsBlue" /></Lead>
      <FrameCell $width={93} $gap={7}>
        <Spin label="栏数" width={53} value="1" />
        <Lock aria-label="栏数" />
      </FrameCell>
      <FrameCell $width={59}>
        <Icon name="cols" color="#aaa" />
        <Lock aria-label="栏宽" />
      </FrameCell>
      <Trail><Icon name="dots" /></Trail>
      <Lock aria-label="栏" />
    </FieldRow>
  </>
);

const TextDocker = () => (
  <Docker>
    <DockerHead>
      <h2>文本</h2>
      <Icon name="dblArrow" size={10} color="#aaa" />
      <Icon name="x" size={10} color="#999" />
    </DockerHead>
    <Row>
      <DockerMain>
        <DockerTools>
          <Tool icon="bigA" label="字符" active />
          <Tool icon="forceJustify" label="段落" />
          <Tool icon="frame" label="图文框" />
          <Spacer />
          <Tool icon="dock" label="导入样式" />
          <Separator $gap={1} />
          <Tool icon="panelEye" label="显示" active />
        </DockerTools>
        <DockerBody>
          <Sections>
            <CharacterSection />
            <ParagraphSection />
            <FrameSection />
          </Sections>
          <DockerScroll>
            <Icon name="chevUp" size={14} color="#bbb" />
            <Icon name="chevDown" size={14} color="#bbb" />
          </DockerScroll>
        </DockerBody>
      </DockerMain>
      <TabColumn>
        <SideTab $height={74} $active>
          <Icon name="textTab" />
          文本
        </SideTab>
        <SideTab $height={102}>
          <Icon name="styleTab" />
          对象样式
        </SideTab>
        <StripCell $height={24} aria-label="添加">
          <Icon name="plus" color="#aaa" />
        </StripCell>
      </TabColumn>
    </Row>
  </Docker>
);

const StandardBar = () => (
  <Toolbar>
    <Tool icon="copy" label="剪切" color="#aaa" />
    <Tool icon="copy" label="复制" color="#aaa" />
    <Tool icon="paste" label="粘贴" />
    <Separator />
    <Tool icon="undo" label="撤消" color="#bbb" />
    <DropButton aria-label="撤消"><Triangle $color="#bbb" /></DropButton>
    <Tool icon="redo" label="重做" />
    <DropButton aria-label="重做"><Triangle /></DropButton>
    <Separator />
    <Tool icon="import" label="导入" />
    <Tool icon="export" label="导出" color="#aaa" />
    <Tool icon="pdf" label="PDF" color="#aaa" />
    <Separator />
    <Combo label="缩放" width={86} value="58%" />
    <TextButton aria-label="全屏预览" $pad={8}><Icon name="fullScreen" /></TextButton>
    <Separator />
    <Tool icon="rulers" label="标尺" active />
    <Tool icon="grid" label="网格" />
    <Tool icon="guides" label="辅助线" active />
    <Separator />
    <Tool icon="snapOff" label="关闭贴齐" />
    <TextButton $pad={6}>
      <span><Accel text="贴齐" letter="T" /></span>
    </TextButton>
    <DropButton aria-label="贴齐"><Triangle /></DropButton>
    <Separator />
    <Tool icon="gear" label="选项" size={18} />
    <Separator />
    <TextButton $pad={4}>
      <Icon name="launch" />
      启动
    </TextButton>
    <TextButton aria-label="启动" $pad={12}><Triangle /></TextButton>
  </Toolbar>
);

const Properties = () => (
  <PropertyBar>
    <Stack>
      <PairSpin label="宽度" width={99} value="210.0 mm" />
      <PairSpin label="高度" width={99} value="297.0 mm" />
    </Stack>
    <Separator $height={42} />
    <PageButtons>
      <Tool icon="portrait" label="纵向" active />
      <Tool icon="landscape" label="横向" />
    </PageButtons>
    <Separator $height={42} />
    <PageButtons>
      <Tool icon="allPages" label="所有页面" active />
      <Tool icon="curPage" label="当前页面" />
    </PageButtons>
    <Separator $height={42} />
    <UnitLabel>
      单位：
      <Combo label="单位" width={102} value="毫米" gray cjk />
    </UnitLabel>
    <Separator $height={42} />
    <FieldIcon><Icon name="nudge" /></FieldIcon>
    <Spin label="微调距离" width={80} value="0.1 mm" />
    <Separator $height={42} />
    <DupIcons>
      <Icon name="dupX" />
      <Icon name="dupY" />
    </DupIcons>
    <Stack>
      <PairSpin label="再制 X" width={97} value="5.0 mm" />
      <PairSpin label="再制 Y" width={97} value="5.0 mm" />
    </Stack>
    <Separator $height={42} />
    <Tool icon="treat" label="视为已填充" active />
    <Separator $height={42} />
    <TextButton aria-label="添加" $pad={10}><Icon name="plus" color="#aaa" /></TextButton>
  </PropertyBar>
);

const DocumentView = () => (
  <DocumentArea>
    <TabStrip>
      <DocTab />
      <AddTab aria-label="新建"><Icon name="plus" color="#aaa" /></AddTab>
    </TabStrip>
    <RulerTop>
      <TopRuler />
      <RulerUnit>毫米</RulerUnit>
    </RulerTop>
    <Row>
      <RulerLeft><SideRuler /></RulerLeft>
      <Column>
        <Row>
          <Canvas><Sheet /></Canvas>
          <VScroll>
            <ScrollButton aria-label="向上"><Icon name="chevUp" size={12} color="#555" /></ScrollButton>
            <Track $grow={172} />
            <Track $grow={430} $thumb />
            <Track $grow={171} />
            <ScrollButton aria-label="向下"><Icon name="chevDown" size={12} color="#555" /></ScrollButton>
          </VScroll>
        </Row>
        <NavRow>
          <PageNav>
            <button aria-label="添加页"><Icon name="addPage" size={13} color="#555" /></button>
            <button aria-label="首页"><Icon name="first" size={11} color="#aaa" /></button>
            <button aria-label="上一页"><Icon name="prev" size={11} color="#aaa" /></button>
            <PageCount><span>1</span><span>的</span><span>1</span></PageCount>
            <button aria-label="下一页"><Icon name="next" size={11} color="#aaa" /></button>
            <button aria-label="末页"><Icon name="last" size={11} color="#aaa" /></button>
            <button aria-label="添加页"><Icon name="addPage" size={13} color="#555" /></button>
          </PageNav>
          <PageTab>
            <svg width="48" height="17" viewBox="0 0 48 17">
              <path d="M0 0L5 16.500H42L48 0z" fill="#fff" />
              <path d="M0 .5L5 16.500H42L47.500 .5" fill="none" stroke="#888" />
            </svg>
            <span>页 1</span>
          </PageTab>
          <NavFill><Grip $height={13} /></NavFill>
          <HScroll>
            <ScrollButton aria-label="向左"><Icon name="chevLeft" size={12} color="#555" /></ScrollButton>
            <Track $grow={1} $thumb />
            <ScrollButton aria-label="向右"><Icon name="chevRight" size={12} color="#555" /></ScrollButton>
            <ScrollButton aria-label="导航器"><Icon name="zoomFit" size={12} color="#555" /></ScrollButton>
          </HScroll>
        </NavRow>
      </Column>
    </Row>
    <DocPalette>
      <Grip $width={8} />
      <Triangle $dir="right" />
      <Icon name="dropper" />
      <Icon name="chevLeft" size={10} color="#bbb" />
      <NoColor size={18} />
      <DocHint>将颜色(或对象)拖动至此处，以便将这些颜色与文档存储在一起</DocHint>
      <Icon name="chevRight" size={12} color="#bbb" />
      <Icon name="dblChev" size={11} color="#aaa" />
    </DocPalette>
  </DocumentArea>
);

const Colors = () => (
  <ColorStrip>
    <StripCell $height={8} aria-label="移动"><Grip $width={17} $height={6} /></StripCell>
    <StripCell $height={18} aria-label="菜单"><Triangle $dir="right" /></StripCell>
    <StripCell $height={20} aria-label="滴管"><Icon name="dropper" size={13} color="#bbb" /></StripCell>
    <StripCell $height={18} aria-label="向上"><Icon name="chevUp" size={14} color="#ccc" /></StripCell>
    <StripColors>
      <StripColor $color="#fff" aria-label="无">
        <svg width="16" height="16" viewBox="0 0 16 16" stroke="#d9303f">
          <path d="M3 13.500L14 2.500" />
        </svg>
      </StripColor>
      {colors.map((c) => (
        <StripColor key={c} $color={c} aria-label={c} />
      ))}
    </StripColors>
    <StripCell $height={14} aria-label="向下"><Icon name="chevDown" size={12} color="#999" /></StripCell>
    <StripCell $height={22} aria-label="展开"><Icon name="dblChev" size={11} color="#999" /></StripCell>
  </ColorStrip>
);

const App = () => {
  return (
    <>
      <GlobalStyle />
      <Window>
        <TitleBar>
          <svg width="16" height="16" viewBox="0 0 16 16">
            <rect width="16" height="16" rx="3" fill="#27a52b" />
            <path d="M8 0h5a3 3 0 013 3v7z" fill="#6cc832" />
            <path d="M4 4l8.500 8.500" stroke="#fff" strokeWidth="3.600" strokeLinecap="round" />
          </svg>
          <Title>CorelDRAW 2020 (64-Bit 评估版) - 未命名 -1</Title>
          <WindowButton aria-label="登录"><Icon name="user" size={15} /></WindowButton>
          <WindowButton aria-label="最小化">
            <svg width="11" height="11"><rect y="8" width="11" height="3" fill="#000" /></svg>
          </WindowButton>
          <WindowButton aria-label="还原"><Icon name="restore" /></WindowButton>
          <WindowButton aria-label="关闭" $width={23}><Icon name="x" size={14} color="#000" /></WindowButton>
        </TitleBar>
        <MenuBar>
          <MenuList>
            {menus.map(([text, letter], i) => (
              <MenuButton key={text} $open={i === 0}>
                <Accel text={text} letter={letter} />
              </MenuButton>
            ))}
          </MenuList>
        </MenuBar>
        <StandardBar />
        <Properties />
        <Workspace>
          <Toolbox>
            <ToolboxButton aria-label="填充"><Icon name="bucket" /></ToolboxButton>
            <ToolboxButton aria-label="轮廓笔"><Icon name="pen" /></ToolboxButton>
            <ToolboxButton aria-label="添加" $last><Icon name="plus" color="#aaa" /></ToolboxButton>
          </Toolbox>
          <DocumentView />
          <TextDocker />
          <Colors />
        </Workspace>
        <StatusBar>
          <Icon name="gear" size={18} />
          <StatusText>
            接着单击可进行拖动或缩放；再单击可旋转或倾斜；双击工具，可选择所有对象；按住
            <Latin> Shift </Latin>键单击可选择多个对象；按住<Latin> Alt </Latin>键单击可进行挖掘
          </StatusText>
          <StatusGroup $grow={200}>
            <Icon name="bucket" />
            <NoColor size={21} line="#999" width={2} />
            无
          </StatusGroup>
          <StatusGroup $grow={261}>
            <Icon name="pen" />
            <Swatch $size={21} $color="#231916" $line="#777" />
            <Ink>
              {inks.map(([name, value]) => (
                <InkValue key={name}><span>{name}</span><span>{value}</span></InkValue>
              ))}
            </Ink>
          </StatusGroup>
          <Icon name="monitor" />
        </StatusBar>
        <TaskBar><span /></TaskBar>

        <FileMenu>
          {fileMenu.map((item, i) =>
            item ? (
              <li key={item.text}>
                <Entry $hot={item.hot} disabled={item.off}>
                  <EntryIcon>
                    {item.icon && <Icon name={item.icon} color={item.off ? "#b8b8b8" : "#333"} />}
                  </EntryIcon>
                  <EntryText><Accel text={item.text} letter={item.key} more={item.more} /></EntryText>
                  {item.short && <Shortcut>{item.short}</Shortcut>}
                  {item.sub && <Triangle $dir="right" />}
                </Entry>
              </li>
            ) : (
              <Rule key={i} />
            )
          )}
        </FileMenu>
        <Pointer width="13" height="20" viewBox="0 0 13 20">
          <path d="M1 1v15l3.500-3.500L7 18.500l2.500-1L7 12h5z" fill="#fff" stroke="#222" />
        </Pointer>
        <InputBadge>
          CH
          <Icon name="moon" size={12} />
          简
        </InputBadge>
        <SiteMark>
          <svg width="42" height="38" viewBox="0 0 42 38" fill="none">
            <path d="M2 28C2 12 16 2 36 2 20 8 14 16 14 26c-4-2-8-1-12 2z" fill="#5c9fdc" />
            <path d="M12 16c10-6 24-4 26 4 1 8-12 16-32 17 12-4 22-9 22-14 0-4-8-6-16-7z" fill="#7cc576" />
            <path d="M8 36c10-1 22-7 24-14l6-1c-1 8-12 15-30 15z" fill="#d9d34e" />
          </svg>
          <div>
            <strong>极光下载站</strong>
            <span>www.xz7.com</span>
          </div>
        </SiteMark>
      </Window>
    </>
  );
};

export default App;
